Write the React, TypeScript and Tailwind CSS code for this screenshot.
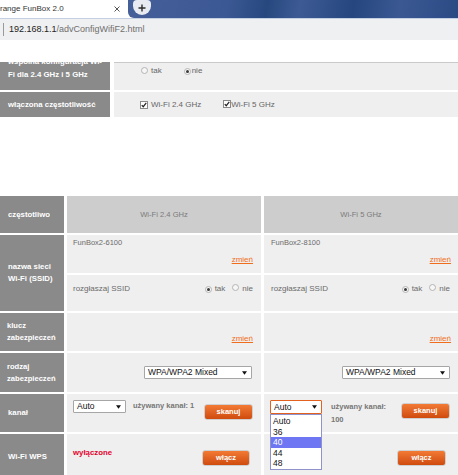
import React from "react";

function Radio({ on }: { on?: boolean }) {
  return (
    <span className="inline-flex w-[7px] h-[7px] shrink-0 rounded-full border border-[#b4b4b4] bg-[#f6f6f6] items-center justify-center">
      {on ? <span className="w-[3px] h-[3px] rounded-full bg-[#3a3a3a]" /> : null}
    </span>
  );
}

function Check() {
  return (
    <span className="inline-flex w-[8px] h-[8px] shrink-0 border border-[#8a8a8a] bg-white items-center justify-center">
      <svg viewBox="0 0 8 8" className="w-[6px] h-[6px]">
        <path d="M1 4.2 L3 6.3 L7 1.2" stroke="#222" strokeWidth="1.6" fill="none" />
      </svg>
    </span>
  );
}

function Arrow() {
  return (
    <svg viewBox="0 0 6 4" className="w-[5px] h-[4px] shrink-0">
      <path d="M0 0 H6 L3 4 Z" fill="#111" />
    </svg>
  );
}

function Btn({ label, className }: { label: string; className: string }) {
  return (
    <div
      className={
        "h-[16px] rounded-[3px] border border-[#cfcfcf] bg-gradient-to-b from-[#f27a34] to-[#cf4a0c] text-white font-bold text-[7.5px] leading-[10px] flex items-center justify-center shrink-0 " +
        className
      }
    >
      {label}
    </div>
  );
}

function Zmien({ className }: { className: string }) {
  return (
    <span className={"text-[8px] leading-[10px] text-[#ef6d1b] underline " + className}>zmień</span>
  );
}

export default function App() {
  return (
    <div className="w-[458px] h-[475px] overflow-hidden bg-white font-['Liberation_Sans',Arial,Helvetica,sans-serif]">
      {/* tab strip */}
      <div className="flex h-[18px]">
        <div className="w-[128px] bg-white flex items-center">
          <span className="flex-1 text-[8px] leading-[10px] text-[#333] whitespace-nowrap">range FunBox 2.0</span>
          <svg className="w-[6px] h-[6px] mr-[8px]" viewBox="0 0 6 6">
            <path d="M0.5 0.5L5.5 5.5M5.5 0.5L0.5 5.5" stroke="#555" strokeWidth="1" />
          </svg>
        </div>
        <div className="flex-1 rounded-bl-[6px] bg-[linear-gradient(100deg,#455f99_0%,#3c5894_30%,#26487f_42%,#3e5a95_52%,#25467f_68%,#3b5893_82%,#2b4a84_100%)] flex items-start pl-[5px]">
          <div className="w-[18px] h-[15px] rounded-b-[9px] rounded-t-[4px] bg-[#e8ebf1] flex items-center justify-center">
            <svg viewBox="0 0 8 8" className="w-[8px] h-[8px]">
              <path d="M4 0.5V7.5M0.5 4H7.5" stroke="#2c2c2c" strokeWidth="1.4" />
            </svg>
          </div>
        </div>
      </div>
      <div className="h-[1px] bg-[#c4d0e2]" />
      {/* address bar */}
      <div className="h-[21px] bg-[#eff0f1] flex items-center pl-[3px]">
        <div className="w-[1px] h-[13px] bg-[#9a9a9a]" />
        <span className="ml-[5px] text-[9px] leading-[11px] text-[#222] whitespace-nowrap">
          192.168.1.1<span className="text-[#6f6f6f]">/advConfigWifiF2.html</span>
        </span>
      </div>
      <div className="h-[22px]" />

      {/* table 1 */}
      <div className="grid grid-cols-[110px_344px] grid-rows-[28px_25px] gap-x-[4px] gap-y-[2px]">
        <div className="bg-[#8a8a8a] overflow-hidden px-[8px]">
          <div className="-mt-[7px] text-white font-bold text-[7.8px] leading-[13px] whitespace-nowrap">
            wspólna konfiguracja Wi-
            <br />
            Fi dla 2.4 GHz i 5 GHz
          </div>
        </div>
        <div className="bg-[#efefef] border-t border-[#c9c9c9] flex items-start pt-[1px] pl-[27px] text-[8px] leading-[13px] text-[#666]">
          <div className="flex items-center h-[13px]">
            <Radio />
            <span className="ml-[3px]">tak</span>
            <span className="ml-[22px]"><Radio on /></span>
            <span className="ml-[1px]">nie</span>
          </div>
        </div>
        <div className="bg-[#8a8a8a] flex items-center px-[8px] text-white font-bold text-[7.8px] leading-[10px] whitespace-nowrap">
          włączona częstotliwość
        </div>
        <div className="bg-[#efefef] flex items-center pl-[26px] text-[8px] leading-[10px] text-[#666]">
          <Check />
          <span className="ml-[3px]">Wi-Fi 2.4 GHz</span>
          <span className="ml-[22px]"><Check /></span>
          <span className="ml-[0px]">Wi-Fi 5 GHz</span>
        </div>
      </div>

      {/* table 2 */}
      <div className="mt-[79px] grid grid-cols-[64px_194px_194px] grid-rows-[37px_38px_36px_38px_39px_38px_47px] gap-x-[3px] gap-y-[2px] text-[#6b6b6b]">
        {/* header */}
        <div className="bg-[#8a8a8a] flex items-center pl-[8px]">
          <span className="w-[42px] overflow-hidden whitespace-nowrap text-white font-bold text-[7.8px] leading-[10px]">
            częstotliwość
          </span>
        </div>
        <div className="bg-[#cdcdcd] flex items-center justify-center text-[7.6px] leading-[10px] text-[#7a7a7a]">Wi-Fi 2.4 GHz</div>
        <div className="bg-[#cdcdcd] flex items-center justify-center text-[7.6px] leading-[10px] text-[#7a7a7a]">Wi-Fi 5 GHz</div>

        {/* SSID */}
        <div className="row-span-2 bg-[#8a8a8a] flex flex-col justify-center pl-[8px] text-white font-bold text-[7.8px] leading-[12px] whitespace-nowrap">
          <span>nazwa sieci</span>
          <span>Wi-Fi (SSID)</span>
        </div>
        <div className="bg-[#efefef] flex flex-col pt-[3px] pl-[6px] pr-[8px]">
          <span className="text-[7.5px] leading-[10px]">FunBox2-6100</span>
          <Zmien className="self-end mt-[7px]" />
        </div>
        <div className="bg-[#efefef] flex flex-col pt-[3px] pl-[7px] pr-[7px]">
          <span className="text-[7.5px] leading-[10px]">FunBox2-8100</span>
          <Zmien className="self-end mt-[7px]" />
        </div>

        <div className="bg-[#efefef] flex items-start pt-[9px] pl-[6px] pr-[8px] text-[8px] leading-[10px]">
          <span>rozgłaszaj SSID</span>
          <div className="ml-auto flex items-center h-[10px]">
            <Radio on />
            <span className="ml-[3px]">tak</span>
            <span className="ml-[7px]"><Radio /></span>
            <span className="ml-[3px]">nie</span>
          </div>
        </div>
        <div className="bg-[#efefef] flex items-start pt-[9px] pl-[7px] pr-[8px] text-[8px] leading-[10px]">
          <span>rozgłaszaj SSID</span>
          <div className="ml-auto flex items-center h-[10px]">
            <Radio on />
            <span className="ml-[3px]">tak</span>
            <span className="ml-[7px]"><Radio /></span>
            <span className="ml-[3px]">nie</span>
          </div>
        </div>

        {/* klucz */}
        <div className="bg-[#8a8a8a] flex flex-col justify-center pl-[7px] text-white font-bold text-[7.6px] leading-[12px] whitespace-nowrap">
          <span>klucz</span>
          <span>zabezpieczeń</span>
        </div>
        <div className="bg-[#efefef] flex items-end justify-end pb-[7px] pr-[8px]">
          <Zmien className="" />
        </div>
        <div className="bg-[#efefef] flex items-end justify-end pb-[7px] pr-[7px]">
          <Zmien className="" />
        </div>

        {/* rodzaj */}
        <div className="bg-[#8a8a8a] flex flex-col justify-center pl-[7px] text-white font-bold text-[7.6px] leading-[12px] whitespace-nowrap">
          <span>rodzaj</span>
          <span>zabezpieczeń</span>
        </div>
        <div className="bg-[#efefef] flex items-center justify-end pr-[9px]">
          <div className="w-[108px] h-[13px] bg-white border border-[#a6a6a6] rounded-[1px] flex items-center justify-between pl-[3px] pr-[4px] text-[8.5px] leading-[11px] text-[#111]">
            <span>WPA/WPA2 Mixed</span>
            <Arrow />
          </div>
        </div>
        <div className="bg-[#efefef] flex items-center justify-end pr-[8px]">
          <div className="w-[108px] h-[13px] bg-white border border-[#a6a6a6] rounded-[1px] flex items-center justify-between pl-[3px] pr-[4px] text-[8.5px] leading-[11px] text-[#111]">
            <span>WPA/WPA2 Mixed</span>
            <Arrow />
          </div>
        </div>

        {/* kanał */}
        <div className="bg-[#8a8a8a] flex items-center pl-[8px] text-white font-bold text-[7.8px] leading-[10px]">kanał</div>
        <div className="bg-[#efefef] flex items-start pt-[6px] pl-[6px] pr-[8px]">
          <div className="w-[53px] h-[13px] bg-white border border-[#a6a6a6] rounded-[1px] flex items-center justify-between pl-[3px] pr-[4px] text-[8.5px] leading-[11px] text-[#111]">
            <span>Auto</span>
            <Arrow />
          </div>
          <span className="ml-[7px] mt-[0px] text-[7.5px] leading-[12px] font-bold text-[#777] whitespace-nowrap">używany kanał: 1</span>
          <Btn label="skanuj" className="ml-auto mt-[4px] w-[49px]" />
        </div>
        <div className="relative bg-[#efefef] flex items-start pt-[6px] pl-[6px] pr-[8px]">
          <div className="w-[52px] h-[14px] bg-white border border-[#e2611e] rounded-[1px] flex items-center justify-between pl-[3px] pr-[4px] text-[8.5px] leading-[11px] text-[#111]">
            <span>Auto</span>
            <Arrow />
          </div>
          <span className="ml-[9px] text-[7.5px] leading-[13px] font-bold text-[#777] whitespace-nowrap">
            używany kanał:
            <br />
            100
          </span>
          <Btn label="skanuj" className="ml-auto mt-[3px] w-[49px]" />
          <div className="absolute left-[6px] top-[20px] z-10 w-[52px] h-[56px] bg-white border border-[#8f93c9] flex flex-col pt-[1px] text-[8.5px] leading-[10.5px] text-[#111]">
            <span className="pl-[2px]">Auto</span>
            <span className="pl-[2px]">36</span>
            <span className="pl-[2px] bg-[#6e76f3] text-white">40</span>
            <span className="pl-[2px]">44</span>
            <span className="pl-[2px]">48</span>
          </div>
        </div>

        {/* WPS */}
        <div className="bg-[#8a8a8a] flex items-center pl-[8px] pb-[2px] text-white font-bold text-[7.8px] leading-[10px] whitespace-nowrap">Wi-Fi WPS</div>
        <div className="bg-[#efefef] flex items-start pl-[6px] pr-[11px]">
          <span className="mt-[14px] text-[7.8px] leading-[10px] font-bold text-[#e4002b]">wyłączone</span>
          <Btn label="włącz" className="ml-auto mt-[16px] w-[48px]" />
        </div>
        <div className="bg-[#efefef] flex items-start pl-[6px] pr-[12px]">
          <Btn label="włącz" className="ml-auto mt-[16px] w-[49px]" />
        </div>
      </div>
    </div>
  );
}
